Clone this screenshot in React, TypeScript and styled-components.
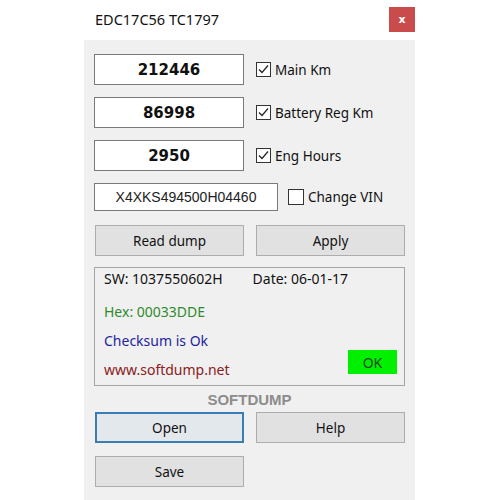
import { ReactElement } from 'react'
import styled, { createGlobalStyle } from 'styled-components'

const GlobalStyle = createGlobalStyle`
  html, body {
    margin: 0;
    padding: 0;
    background: #ffffff;
  }
  body {
    font-family: "Noto Sans", "Open Sans", sans-serif;
  }
`

const Page = styled.div`
  width: 500px;
  height: 500px;
  overflow: hidden;
  display: flex;
  justify-content: flex-start;
  padding-left: 84px;
  box-sizing: border-box;
`

const Window = styled.div`
  width: 331px;
  display: flex;
  flex-direction: column;
`

const TitleBar = styled.div`
  height: 40px;
  background: #ffffff;
  display: flex;
  align-items: center;
  justify-content: space-between;
  padding-left: 11px;
`

const Title = styled.span`
  font-size: 14.5px;
  color: #111111;
  padding-bottom: 2px;
`

const CloseButton = styled.div`
  width: 26px;
  height: 25px;
  margin-bottom: 2px;
  background: #c94b4b;
  color: #ffffff;
  font-family: "DejaVu Sans", sans-serif;
  font-size: 11px;
  font-weight: bold;
  display: flex;
  align-items: center;
  justify-content: center;
`

const Body = styled.div`
  flex: 1;
  background: #f0f0f0;
  padding: 14px 10px 0 10px;
  display: flex;
  flex-direction: column;
`

const FieldRow = styled.div<{ $gap?: number; $mb?: number }>`
  display: flex;
  align-items: center;
  gap: ${(p) => p.$gap ?? 12}px;
  margin-bottom: ${(p) => p.$mb ?? 12}px;
`

const ValueBox = styled.div`
  width: 150px;
  height: 31px;
  box-sizing: border-box;
  background: #ffffff;
  border: 1px solid #7a7a7a;
  display: flex;
  align-items: center;
  justify-content: center;
  font-family: "DejaVu Sans", sans-serif;
  font-weight: bold;
  font-size: 15px;
  color: #111111;
`

const VinBox = styled.div`
  width: 184px;
  height: 28px;
  box-sizing: border-box;
  background: #ffffff;
  border: 1px solid #7a7a7a;
  display: flex;
  align-items: center;
  justify-content: center;
  font-family: "Liberation Sans", Arial, sans-serif;
  font-size: 14px;
  color: #222222;
`

const Check = styled.label`
  display: flex;
  align-items: center;
  gap: 4px;
  font-size: 13.5px;
  color: #111111;
`

const Box = styled.span<{ $size: number }>`
  width: ${(p) => p.$size}px;
  height: ${(p) => p.$size}px;
  box-sizing: border-box;
  border: 1px solid #333333;
  background: #ffffff;
  display: flex;
  align-items: center;
  justify-content: center;
`

const ButtonGrid = styled.div<{ $mb: number }>`
  display: grid;
  grid-template-columns: 149px 149px;
  column-gap: 12px;
  padding-left: 1px;
  margin-bottom: ${(p) => p.$mb}px;
`

const Button = styled.div<{ $focused?: boolean }>`
  height: 31px;
  box-sizing: border-box;
  background: ${(p) => (p.$focused ? '#e3e8ec' : '#e1e1e1')};
  border: ${(p) => (p.$focused ? '2px solid #3a7db4' : '1px solid #adadad')};
  display: flex;
  align-items: center;
  justify-content: center;
  font-size: 13.5px;
  color: #111111;
`

const InfoPanel = styled.div`
  height: 119px;
  width: 311px;
  box-sizing: border-box;
  border: 1px solid #a5a5a5;
  padding: 0 7px 0 9px;
  display: flex;
  flex-direction: column;
  font-size: 14px;
`

const InfoLine = styled.div<{ $color: string; $h: number }>`
  height: ${(p) => p.$h}px;
  display: flex;
  align-items: center;
  color: ${(p) => p.$color};
`

const DateText = styled.span`
  margin-left: 30px;
`

const LastLine = styled.div`
  flex: 1;
  display: flex;
  justify-content: space-between;
  align-items: flex-start;
`

const Link = styled.span`
  color: #8a2020;
  padding-top: 13px;
`

const OkBadge = styled.div`
  width: 49px;
  height: 24px;
  margin-top: 3px;
  background: #00f000;
  color: #1d4a1d;
  display: flex;
  align-items: center;
  justify-content: center;
  font-size: 14px;
`

const Brand = styled.div`
  height: 26px;
  display: flex;
  align-items: center;
  justify-content: center;
  font-family: "Liberation Sans", Arial, sans-serif;
  font-weight: bold;
  font-size: 15px;
  color: #8c8c8c;
`

const Tick = (): ReactElement => (
  <svg width="13" height="13" viewBox="0 0 13 13">
    <path d="M2 6.5 L5 9.5 L11 2.5" fill="none" stroke="#222222" strokeWidth="1.2" />
  </svg>
)

const fields = [
  { value: '212446', label: 'Main Km' },
  { value: '86998', label: 'Battery Reg Km' },
  { value: '2950', label: 'Eng Hours' },
]

const App = (): ReactElement => {
  return (
    <Page>
      <GlobalStyle />
      <Window>
        <TitleBar>
          <Title>EDC17C56 TC1797</Title>
          <CloseButton>x</CloseButton>
        </TitleBar>
        <Body>
          {fields.map((f) => (
            <FieldRow key={f.label}>
              <ValueBox>{f.value}</ValueBox>
              <Check>
                <Box $size={15}>
                  <Tick />
                </Box>
                {f.label}
              </Check>
            </FieldRow>
          ))}
          <FieldRow $gap={10} $mb={14}>
            <VinBox>X4XKS494500H04460</VinBox>
            <Check>
              <Box $size={16} />
              Change VIN
            </Check>
          </FieldRow>
          <ButtonGrid $mb={11}>
            <Button>Read dump</Button>
            <Button>Apply</Button>
          </ButtonGrid>
          <InfoPanel>
            <InfoLine $color="#111111" $h={20}>
              SW: 1037550602H
              <DateText>Date: 06-01-17</DateText>
            </InfoLine>
            <InfoLine $color="#2f8a2f" $h={46}>
              Hex: 00033DDE
            </InfoLine>
            <InfoLine $color="#1f1fa0" $h={13}>
              Checksum is Ok
            </InfoLine>
            <LastLine>
              <Link>www.softdump.net</Link>
              <OkBadge>OK</OkBadge>
            </LastLine>
          </InfoPanel>
          <Brand>SOFTDUMP</Brand>
          <ButtonGrid $mb={13}>
            <Button $focused>Open</Button>
            <Button>Help</Button>
          </ButtonGrid>
          <ButtonGrid $mb={0}>
            <Button>Save</Button>
          </ButtonGrid>
        </Body>
      </Window>
    </Page>
  )
}

export default App
